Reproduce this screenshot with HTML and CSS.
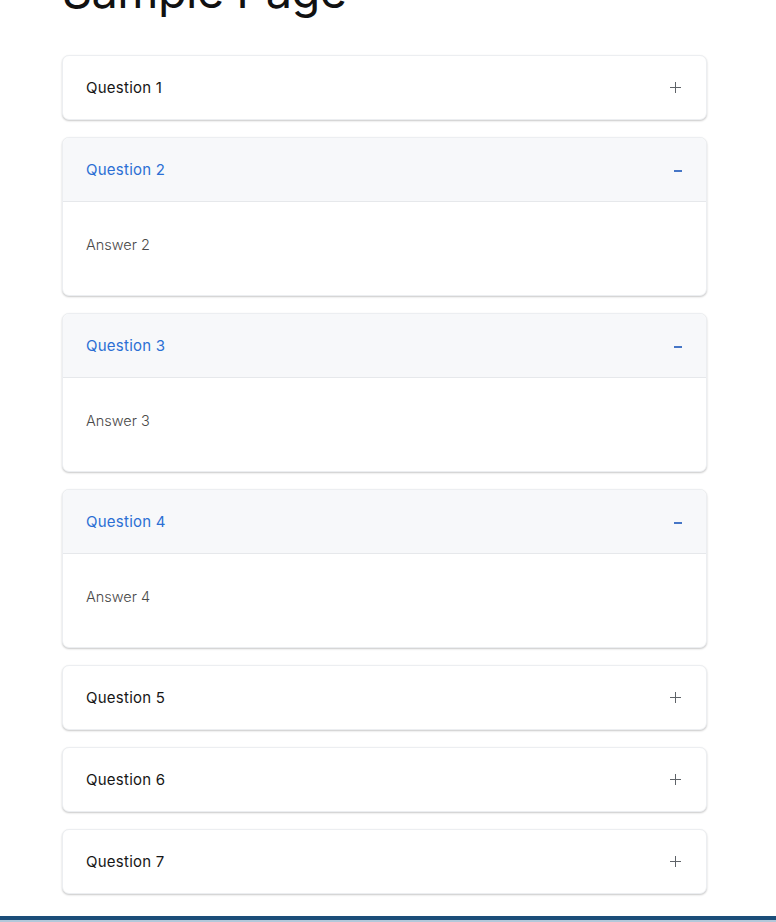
FILE: index.html
```html
<!DOCTYPE html>
<html lang="en">
<head>
<meta charset="utf-8">
<title>Sample Page</title>
<link rel="stylesheet" href="styles.css">
</head>
<body>
<main class="page">
  <h1 class="title">Sample Page</h1>
  <div class="accordion">
    <div class="item">
      <div class="head"><span class="q">Question 1</span><span class="icon plus"></span></div>
    </div>
    <div class="item open">
      <div class="head"><span class="q">Question 2</span><span class="icon minus"></span></div>
      <div class="body">Answer 2</div>
    </div>
    <div class="item open">
      <div class="head"><span class="q">Question 3</span><span class="icon minus"></span></div>
      <div class="body">Answer 3</div>
    </div>
    <div class="item open">
      <div class="head"><span class="q">Question 4</span><span class="icon minus"></span></div>
      <div class="body">Answer 4</div>
    </div>
    <div class="item">
      <div class="head"><span class="q">Question 5</span><span class="icon plus"></span></div>
    </div>
    <div class="item">
      <div class="head"><span class="q">Question 6</span><span class="icon plus"></span></div>
    </div>
    <div class="item">
      <div class="head"><span class="q">Question 7</span><span class="icon plus"></span></div>
    </div>
  </div>
</main>
<footer class="footer"></footer>
</body>
</html>
```

FILE: styles.css
```css
html, body {
  margin: 0;
  padding: 0;
  background: #fff;
  font-family: "Inter", "Noto Sans", sans-serif;
  overflow: hidden;
}

.page {
  padding: 0 69px 0 62px;
}

.title {
  font-family: "Inter", sans-serif;
  font-weight: 400;
  font-size: 47px;
  line-height: 58px;
  letter-spacing: -0.6px;
  color: #111;
  margin: -38px 0 35px;
}

.accordion {
  display: flex;
  flex-direction: column;
  gap: 17px;
}

.item {
  background: #fff;
  border: 1px solid #eceef1;
  border-radius: 7px;
  box-shadow: 0 1px 2px rgba(0, 0, 0, 0.22);
  overflow: hidden;
}

.head {
  height: 63px;
  display: flex;
  align-items: center;
  justify-content: space-between;
  padding: 0 23px;
}

.q {
  font-size: 15px;
  font-weight: 400;
  color: #161616;
  letter-spacing: 0.25px;
}

.open .head {
  background: #f7f8fa;
  border-bottom: 1px solid #e6e8eb;
}

.open .q {
  color: #2b6fd4;
}

.icon {
  position: relative;
  width: 11px;
  height: 11px;
}

.plus {
  margin-right: 2px;
}

.plus::before,
.plus::after {
  content: "";
  position: absolute;
  background: #5f6368;
}

.plus::before {
  left: 0;
  right: 0;
  top: 5px;
  height: 1.2px;
}

.plus::after {
  top: 0;
  bottom: 0;
  left: 5px;
  width: 1.2px;
}

.minus {
  width: 8px;
  margin-right: 1px;
}

.minus::before {
  content: "";
  position: absolute;
  left: 0;
  right: 0;
  top: 6px;
  height: 2px;
  background: #4676c6;
}

.body {
  height: 93px;
  box-sizing: border-box;
  padding: 33px 23px 0;
  font-size: 14.5px;
  line-height: 20px;
  font-weight: 300;
  color: #4a4a4a;
  letter-spacing: 0;
}

.footer {
  margin-top: 22px;
  height: 6px;
  border-top: 4px solid #1b4d79;
  background: #b3c8da;
}
```
